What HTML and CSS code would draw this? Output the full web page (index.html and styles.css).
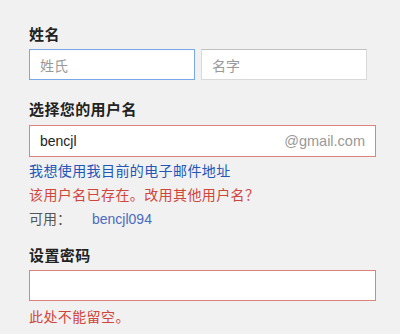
FILE: index.html
```html
<!DOCTYPE html>
<html>
<head>
    <title>注册</title>
    <link rel="stylesheet" href="styles.css">
</head>
<body>
    <div class="form">
        <!-- 姓名 -->
        <div class="field field-name">
            <div class="label">姓名</div>
            <div class="name-row">
                <div class="input focus"><span class="placeholder">姓氏</span></div>
                <div class="input"><span class="placeholder">名字</span></div>
            </div>
        </div>

        <!-- 用户名 -->
        <div class="field field-user">
            <div class="label">选择您的用户名</div>
            <div class="input wide error user">
                <span class="value">bencjl</span>
                <span class="suffix">@gmail.com</span>
            </div>
            <div class="line first"><a class="link" href="#">我想使用我目前的电子邮件地址</a></div>
            <div class="line error-text">该用户名已存在。改用其他用户名？</div>
            <div class="line available">
                <span class="avail-label">可用：</span>
                <a class="suggest" href="#">bencjl094</a>
            </div>
        </div>

        <!-- 密码 -->
        <div class="field field-pass">
            <div class="label">设置密码</div>
            <div class="input wide error pass"></div>
            <div class="line error-text last">此处不能留空。</div>
        </div>
    </div>
</body>
</html>
```

FILE: styles.css
```css
:root {
    --bg: #f1f1f1;
    --text: #222;
    --link: #2256b8;
    --suggest: #4a6bc0;
    --danger: #d0463a;
    --danger-border: #d9847c;
    --focus-border: #7aa7e8;
    --muted: #999;
}

* {
    margin: 0;
    padding: 0;
    box-sizing: border-box;
}

body {
    font-family: Arial, "Liberation Sans", "Noto Sans CJK SC", sans-serif;
    background-color: var(--bg);
    color: var(--text);
    font-size: 14px;
    width: 400px;
    height: 334px;
    overflow: hidden;
}

.form {
    padding: 26px 0 0 29px;
}

.label {
    font-size: 15px;
    font-weight: bold;
    line-height: 18px;
    letter-spacing: 0.4px;
    margin-bottom: 5px;
}

.field-user {
    margin-top: 21px;
}

.field-user .label {
    margin-bottom: 6px;
}

.field-pass {
    margin-top: 16px;
}

/* Inputs */
.name-row {
    display: flex;
    gap: 6px;
}

.input {
    width: 166px;
    height: 31px;
    background-color: #fff;
    border: 1px solid #d9d9d9;
    border-top-color: #c0c0c0;
    display: flex;
    align-items: center;
    padding: 0 10px;
}

.input.focus {
    border-color: var(--focus-border);
}

.input.wide {
    width: 347px;
}

.input.user {
    height: 32px;
    justify-content: space-between;
}

.input.error {
    border-color: var(--danger-border);
}

.placeholder {
    color: var(--muted);
    font-size: 14px;
}

.value {
    font-size: 14px;
    color: #222;
}

.suffix {
    font-size: 14.5px;
    color: var(--muted);
}

/* Messages */
.line {
    line-height: 24px;
}

.line.first {
    margin-top: 2px;
}

.line.last {
    margin-top: 4px;
}

.link {
    color: var(--link);
    text-decoration: none;
    letter-spacing: 0.4px;
}

.error-text {
    color: var(--danger);
    letter-spacing: 0.4px;
}

.available {
    display: flex;
}

.avail-label {
    color: #555;
    width: 63px;
}

.suggest {
    color: var(--suggest);
    text-decoration: none;
}
```
